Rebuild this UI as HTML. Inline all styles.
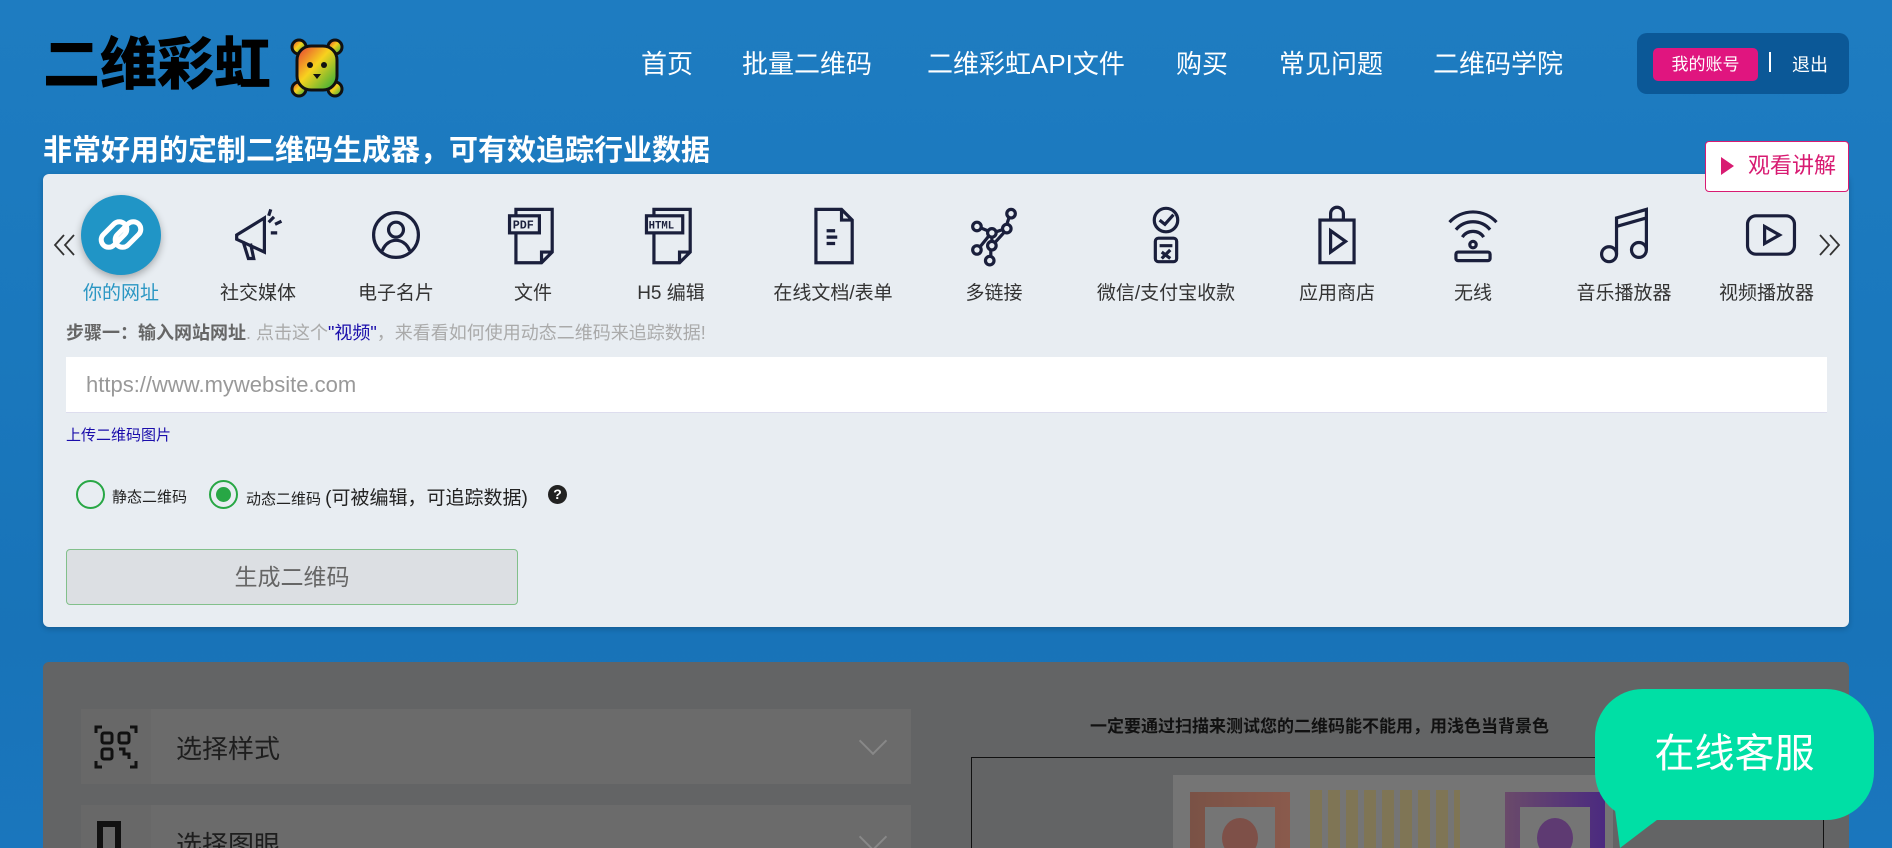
<!DOCTYPE html>
<html><head><meta charset="utf-8">
<style>
*{margin:0;padding:0;box-sizing:border-box}
html,body{width:1892px;height:848px;overflow:hidden}
body{background:linear-gradient(#1e7cc1,#1a78bd 40%,#1873b8 75%,#1a76bd);font-family:"Liberation Sans","Noto Sans CJK SC",sans-serif;position:relative}
.abs{position:absolute}
.logo{left:43px;top:32px;font-size:57px;font-weight:900;color:#000;letter-spacing:0;line-height:66px}
.nav a{position:absolute;top:46px;font-size:26px;color:#fff;line-height:36px;white-space:nowrap}
.acct{left:1637px;top:33px;width:212px;height:61px;background:#0b5897;border-radius:10px}
.pink{left:1653px;top:48px;width:105px;height:33px;background:#e0157f;border-radius:5px;color:#fff;font-size:17px;line-height:33px;text-align:center}
.sub{left:43px;top:132px;font-size:29px;font-weight:bold;color:#fff;line-height:38px}
.card{left:43px;top:174px;width:1806px;height:453px;background:#e8edf2;border-radius:6px;box-shadow:0 2px 6px rgba(0,0,0,.2)}
.watch{left:1705px;top:141px;width:144px;height:51px;background:#fff;border:1.5px solid #d81b72;border-radius:4px;color:#d81b72;font-size:22px;line-height:48px;padding-left:42px}
.watch:before{content:"";position:absolute;left:15px;top:15px;border-left:13px solid #d81b72;border-top:9px solid transparent;border-bottom:9px solid transparent}
.it{position:absolute;top:203px;width:160px;margin-left:-80px;text-align:center}
.it svg{display:block;margin:0 auto;width:60px;height:64px}
.it span{display:block;font-size:19px;color:#333;margin-top:14px;line-height:26px;white-space:nowrap}
.circ{left:81px;top:195px;width:80px;height:80px;border-radius:50%;background:#2095c6;box-shadow:0 3px 8px rgba(0,0,0,.3)}
.step{left:66px;top:320px;font-size:18px;color:#aaa;line-height:26px}
.input{left:66px;top:357px;width:1761px;height:56px;background:#fff;border-bottom:1px solid #dde;color:#999;font-size:22px;line-height:56px;padding-left:20px}
.up{left:66px;top:424px;font-size:15px;color:#1a0dab}
.rad{width:29px;height:29px;border:2.5px solid #28a745;border-radius:50%;top:480px}
.gen{left:66px;top:549px;width:452px;height:56px;background:#dcdfe3;border:1px solid #82c08b;border-radius:4px;font-size:23px;color:#666;text-align:center;line-height:54px}
.panel{left:43px;top:662px;width:1806px;height:186px;background:#636465;border-radius:6px 6px 0 0;overflow:hidden}
.row{left:81px;width:830px;height:75px;background:#6b6b6b;overflow:hidden}
.row .ic{position:absolute;left:0;top:0;width:70px;height:75px;background:#686868}
.row b{position:absolute;left:95px;top:20px;font-weight:normal;font-size:26px;color:#1e1e1e}
.row i{position:absolute;right:28px;top:22px;width:20px;height:20px;border-right:2px solid #888;border-bottom:2px solid #888;transform:rotate(45deg)}
.chat{left:1595px;top:689px;width:279px;height:131px;background:#00dfa5;border-radius:48px;color:#fff;font-size:40px;text-align:center;line-height:131px}
</style></head><body>
<div class="abs logo">二维彩虹</div>
<svg class="abs" style="left:289px;top:38px" width="56" height="60" viewBox="0 0 56 60">
<defs><linearGradient id="rb" x1="0" y1="0" x2="1" y2="1"><stop offset="0" stop-color="#e53935"/><stop offset=".45" stop-color="#f7d21e"/><stop offset="1" stop-color="#1faa3a"/></linearGradient></defs>
<g stroke="#111" stroke-width="3" fill="url(#rb)"><circle cx="10" cy="9" r="7"/><circle cx="46" cy="9" r="7"/><circle cx="10" cy="51" r="7"/><circle cx="46" cy="51" r="7"/><rect x="8" y="8" width="40" height="44" rx="14"/></g>
<circle cx="21" cy="27" r="3" fill="#111"/><circle cx="35" cy="27" r="3" fill="#111"/><path d="M24 36h8l-4 5z" fill="#111"/></svg>
<div class="nav"><a style="left:641px">首页</a><a style="left:742px">批量二维码</a><a style="left:927px">二维彩虹API文件</a><a style="left:1176px">购买</a><a style="left:1279px">常见问题</a><a style="left:1433px">二维码学院</a></div>
<div class="abs acct"></div>
<div class="abs pink">我的账号</div>
<div class="abs" style="left:1769px;top:52px;width:2px;height:20px;background:#fff"></div>
<div class="abs" style="left:1792px;top:51px;color:#fff;font-size:18px">退出</div>
<div class="abs sub">非常好用的定制二维码生成器，可有效追踪行业数据</div>
<div class="abs card"></div>
<div class="abs watch">观看讲解</div>
<div class="abs circ"></div>
<svg class="abs" style="left:52px;top:232px" width="26" height="26" viewBox="0 0 26 26" fill="none" stroke="#333" stroke-width="1.8"><path d="M12 3L3 13l9 10M22 3l-9 10 9 10"/></svg>
<svg class="abs" style="left:1816px;top:232px" width="26" height="26" viewBox="0 0 26 26" fill="none" stroke="#333" stroke-width="1.8"><path d="M4 3l9 10-9 10M14 3l9 10-9 10"/></svg>
<svg class="abs" style="left:91px;top:205px" width="60" height="60" viewBox="0 0 60 60" fill="none" stroke="#fff" stroke-width="5"><rect x="8" y="22" width="30" height="15" rx="7.5" transform="rotate(-45 23 29.5)"/><rect x="22" y="22" width="30" height="15" rx="7.5" transform="rotate(-45 37 29.5)"/></svg>
<div class="it" style="left:121px"><svg></svg><span style="color:#2a96c3">你的网址</span></div>
<div class="it" style="left:258px"><svg viewBox="0 0 56 60" fill="none" stroke="#1a1f3c" stroke-width="3"><path d="M8 30l26-16v32L8 34z M8 30v4 M14 36l5 16h5l-3-14 M38 18l5-5 M40 28h6 M38 12l2-6 M44 20l6-3"/></svg><span>社交媒体</span></div>
<div class="it" style="left:396px"><svg viewBox="0 0 56 60" fill="none" stroke="#1a1f3c" stroke-width="3"><circle cx="28" cy="30" r="21"/><circle cx="28" cy="25" r="7"/><path d="M15 45c3-8 9-10 13-10s10 2 13 10"/></svg><span>电子名片</span></div>
<div class="it" style="left:533px"><svg viewBox="0 0 56 60" fill="none" stroke="#1a1f3c" stroke-width="3"><path d="M12 6h34v40l-10 10H12z M36 56V46h10"/><rect x="6" y="12" width="28" height="16" fill="#e8edf2"/><text x="9" y="24" font-size="11" font-weight="bold" fill="#1a1f3c" stroke="none" font-family="Liberation Mono">PDF</text></svg><span>文件</span></div>
<div class="it" style="left:671px"><svg viewBox="0 0 56 60" fill="none" stroke="#1a1f3c" stroke-width="3"><path d="M12 6h34v40l-10 10H12z M36 56V46h10"/><rect x="5" y="12" width="34" height="16" fill="#e8edf2"/><text x="7" y="24" font-size="10" font-weight="bold" fill="#1a1f3c" stroke="none" font-family="Liberation Mono">HTML</text></svg><span>H5 编辑</span></div>
<div class="it" style="left:833px"><svg viewBox="0 0 56 60" fill="none" stroke="#1a1f3c" stroke-width="3"><path d="M12 6h24l10 10v40H12z M36 6v10h10 M22 26h8 M22 32h10 M22 38h8"/></svg><span>在线文档/表单</span></div>
<div class="it" style="left:994px"><svg viewBox="0 0 56 60" fill="none" stroke="#1a1f3c" stroke-width="3"><circle cx="44" cy="10" r="4"/><circle cx="40" cy="24" r="4"/><circle cx="26" cy="28" r="4"/><circle cx="12" cy="22" r="4"/><circle cx="12" cy="44" r="4"/><circle cx="26" cy="40" r="4"/><circle cx="24" cy="54" r="4"/><path d="M42 14l-2 6M36 25l-6 2M22 26l-7-3M23 31l-8 10M26 32v4M25 44v6M29 37l9-10"/></svg><span>多链接</span></div>
<div class="it" style="left:1166px"><svg viewBox="0 0 56 60" fill="none" stroke="#1a1f3c" stroke-width="3"><circle cx="28" cy="16" r="11"/><path d="M22 16l5 4 8-9"/><rect x="18" y="33" width="20" height="22" rx="3"/><path d="M22 40h12M24 46l8 6M32 44l-8 8"/></svg><span>微信/支付宝收款</span></div>
<div class="it" style="left:1337px"><svg viewBox="0 0 56 60" fill="none" stroke="#1a1f3c" stroke-width="3"><rect x="12" y="16" width="32" height="40"/><path d="M22 16v-6a6 6 0 0112 0v6 M22 26l14 10-14 10z"/></svg><span>应用商店</span></div>
<div class="it" style="left:1473px"><svg viewBox="0 0 56 60" fill="none" stroke="#1a1f3c" stroke-width="3"><path d="M6 18a30 30 0 0144 0M12 25a21 21 0 0132 0M18 32a12 12 0 0120 0"/><circle cx="28" cy="39" r="3"/><rect x="12" y="46" width="32" height="8" rx="2"/></svg><span>无线</span></div>
<div class="it" style="left:1624px"><svg viewBox="0 0 56 60" fill="none" stroke="#1a1f3c" stroke-width="3"><ellipse cx="14" cy="48" rx="7" ry="7"/><ellipse cx="42" cy="44" rx="7" ry="7"/><path d="M21 48V14l28-8v38 M21 22l28-8"/></svg><span>音乐播放器</span></div>
<div class="it" style="left:1771px;width:120px;margin-left:-60px;overflow:hidden"><svg viewBox="0 0 56 60" fill="none" stroke="#1a1f3c" stroke-width="3"><rect x="6" y="12" width="44" height="36" rx="8"/><path d="M22 22l14 8-14 8z"/></svg><span style="text-align:left;padding-left:8px">视频播放器</span></div>
<div class="abs step"><b style="color:#666">步骤一：输入网站网址</b>. 点击这个<span style="color:#1a0dab">"视频"</span>，来看看如何使用动态二维码来追踪数据!</div>
<div class="abs input">https://www.mywebsite.com</div>
<div class="abs up">上传二维码图片</div>
<div class="abs rad" style="left:76px"></div>
<div class="abs" style="left:112px;top:486px;font-size:15px;color:#222">静态二维码</div>
<div class="abs rad" style="left:209px"></div>
<div class="abs" style="left:216px;top:487px;width:15px;height:15px;border-radius:50%;background:#28a745"></div>
<div class="abs" style="left:246px;top:483px;font-size:15px;color:#222">动态二维码 <span style="font-size:19px">(可被编辑，可追踪数据)</span></div>
<div class="abs" style="left:548px;top:485px;width:19px;height:19px;border-radius:50%;background:#222;color:#fff;font-size:14px;font-weight:bold;text-align:center;line-height:19px">?</div>
<div class="abs gen">生成二维码</div>
<div class="abs panel"></div>
<div class="abs row" style="top:709px"><div class="ic"><svg width="70" height="75" viewBox="0 0 70 75" fill="none" stroke="#111" stroke-width="3"><path d="M15 24v-6h6M49 18h6v6M15 52v6h6M55 52v6h-6"/><rect x="21" y="24" width="10" height="10" rx="2"/><rect x="38" y="24" width="10" height="10" rx="2"/><rect x="21" y="40" width="10" height="10" rx="2"/><path d="M38 40h5v5h5v5"/></svg></div><b>选择样式</b><i></i></div>
<div class="abs row" style="top:805px;height:43px"><div class="ic"><div style="position:absolute;left:16px;top:16px;width:24px;height:40px;border:6px solid #111"></div></div><b>选择图眼</b><i></i></div>
<div class="abs" style="left:1090px;top:712px;font-size:17px;font-weight:bold;color:#111">一定要通过扫描来测试您的二维码能不能用，用浅色当背景色</div>
<div class="abs" style="left:971px;top:757px;width:853px;height:100px;border:1.5px solid #111"></div>
<div class="abs" style="left:1173px;top:775px;width:440px;height:80px;background:#757575"></div>
<div class="abs" style="left:1190px;top:792px;width:100px;height:60px;background:linear-gradient(90deg,#7a5246,#8a5a4c);"></div>
<div class="abs" style="left:1205px;top:807px;width:70px;height:50px;background:#757575"></div>
<div class="abs" style="left:1222px;top:818px;width:36px;height:40px;border-radius:50%;background:#7e5048"></div>
<div class="abs" style="left:1310px;top:790px;width:150px;height:58px;background:repeating-linear-gradient(90deg,#7f7555 0 12px,transparent 12px 18px)"></div>
<div class="abs" style="left:1505px;top:792px;width:100px;height:60px;background:linear-gradient(90deg,#6a4a6a,#4b2a80)"></div>
<div class="abs" style="left:1520px;top:807px;width:70px;height:50px;background:#757575"></div>
<div class="abs" style="left:1537px;top:818px;width:36px;height:40px;border-radius:50%;background:#5e3a72"></div>
<div class="abs chat">在线客服</div>
<svg class="abs" style="left:1610px;top:810px" width="60" height="38"><path d="M5 0h55L10 38z" fill="#00dfa5"/></svg>
</body></html>
